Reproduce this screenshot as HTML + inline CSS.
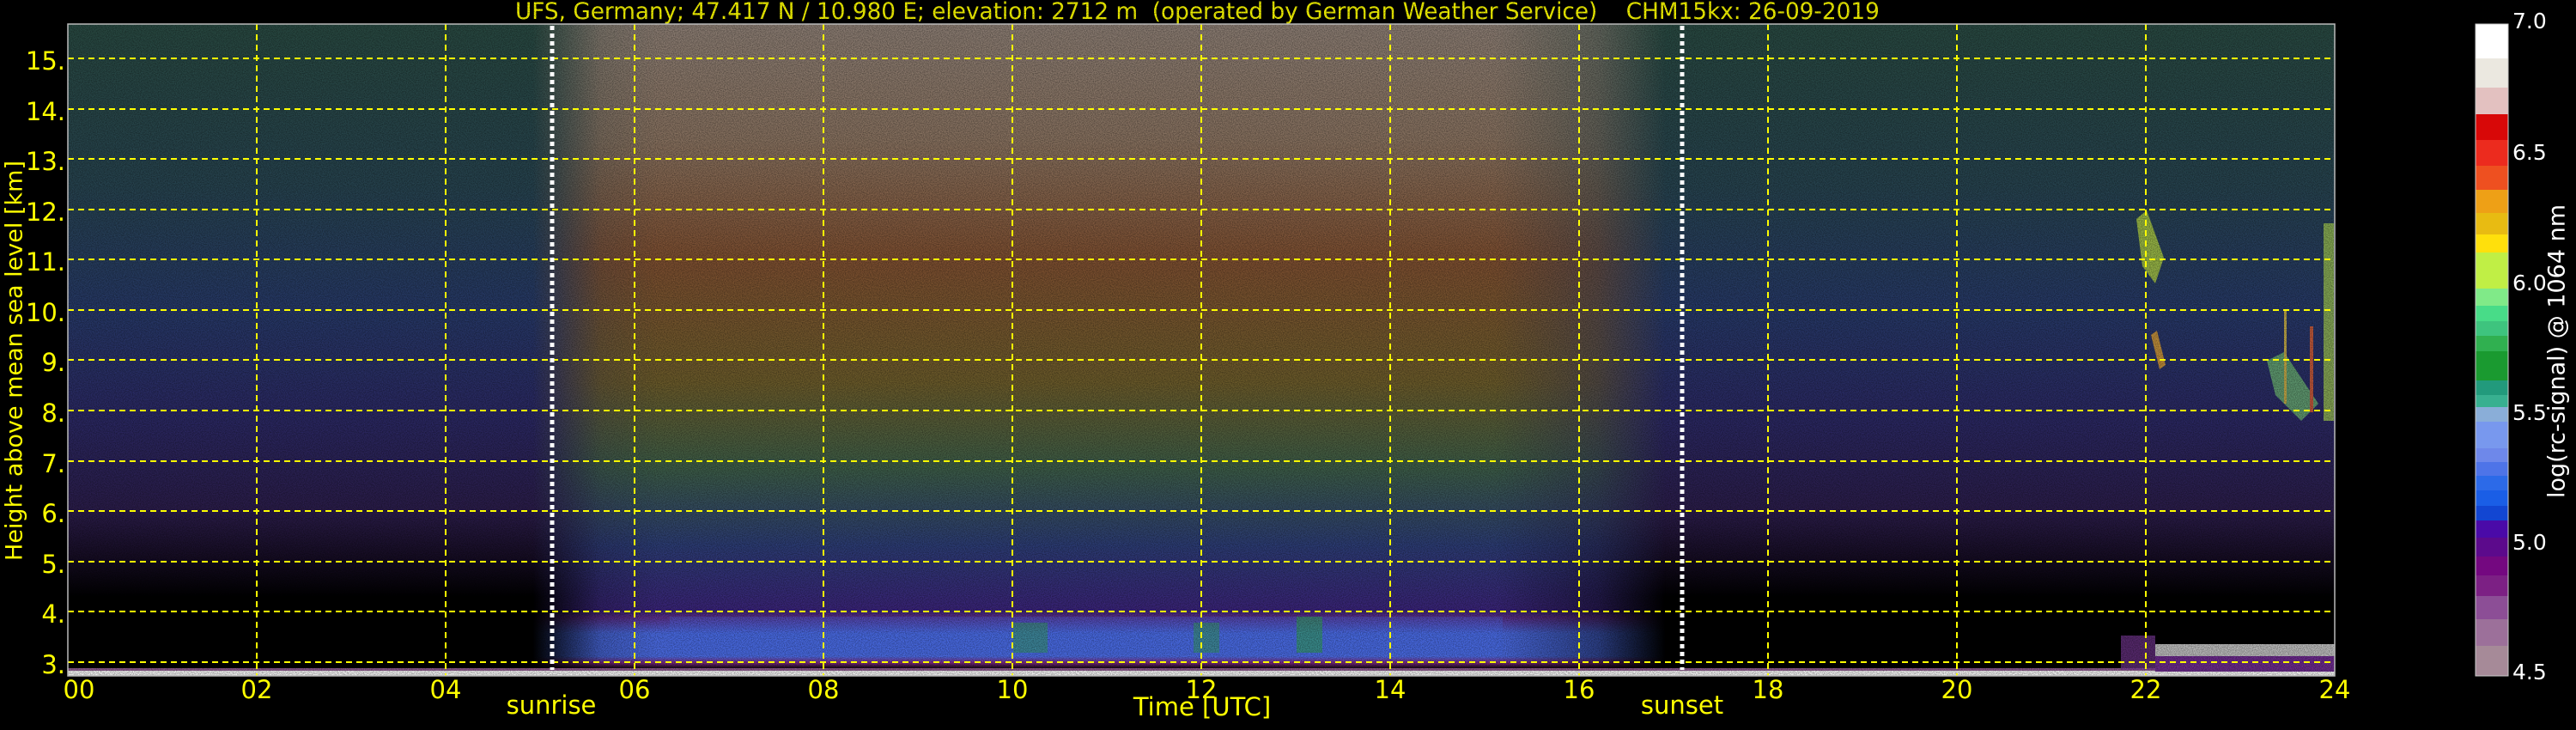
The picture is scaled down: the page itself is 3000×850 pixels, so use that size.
<!DOCTYPE html>
<html><head><meta charset="utf-8"><style>
body{margin:0;background:#000;width:3000px;height:850px;overflow:hidden;position:relative;font-family:"DejaVu Sans","Liberation Sans",sans-serif;}
.t{position:absolute;color:#ffff00;white-space:nowrap;}
.yl{position:absolute;color:#ffff00;font-size:29px;right:2924px;text-align:right;line-height:30px;}
.xl{position:absolute;color:#ffff00;font-size:29px;line-height:30px;transform:translateX(-50%);top:788px;}
.cl{position:absolute;color:#fff;font-size:25px;left:2926px;line-height:26px;}
</style></head><body>
<div class="t" style="left:600px;top:-2px;font-size:26.3px;line-height:32px;">UFS, Germany; 47.417 N / 10.980 E; elevation: 2712 m&nbsp; (operated by German Weather Service) &nbsp;&nbsp; CHM15kx: 26-09-2019</div>

<svg width="3000" height="850" style="position:absolute;left:0;top:0">
<defs>
<linearGradient id="night" x1="0" y1="28" x2="0" y2="787" gradientUnits="userSpaceOnUse">
<stop offset="0" stop-color="#284840"/>
<stop offset="0.25" stop-color="#26424e"/>
<stop offset="0.44" stop-color="#263866"/>
<stop offset="0.6" stop-color="#2a2862"/>
<stop offset="0.75" stop-color="#2a1c48"/>
<stop offset="0.82" stop-color="#150c22"/>
<stop offset="0.88" stop-color="#000"/>
<stop offset="1" stop-color="#000"/>
</linearGradient>
<linearGradient id="day" x1="0" y1="28" x2="0" y2="787" gradientUnits="userSpaceOnUse">
<stop offset="0" stop-color="#8a7c72"/>
<stop offset="0.18" stop-color="#86705e"/>
<stop offset="0.36" stop-color="#7c4e30"/>
<stop offset="0.55" stop-color="#6a5a2a"/>
<stop offset="0.68" stop-color="#3c5c46"/>
<stop offset="0.8" stop-color="#2c3c74"/>
<stop offset="0.9" stop-color="#3a2478"/>
<stop offset="0.91" stop-color="#5a2e8a"/>
<stop offset="0.935" stop-color="#4a6ae0"/>
<stop offset="0.97" stop-color="#4a6ae0"/>
<stop offset="0.98" stop-color="#7a2a80"/>
<stop offset="0.99" stop-color="#000"/>
<stop offset="1" stop-color="#000"/>
</linearGradient>
<linearGradient id="hmask" x1="79" y1="0" x2="2719" y2="0" gradientUnits="userSpaceOnUse">
<stop offset="0.205" stop-color="#fff" stop-opacity="0"/>
<stop offset="0.235" stop-color="#fff" stop-opacity="0.85"/>
<stop offset="0.26" stop-color="#fff" stop-opacity="1"/>
<stop offset="0.63" stop-color="#fff" stop-opacity="1"/>
<stop offset="0.675" stop-color="#fff" stop-opacity="0.6"/>
<stop offset="0.705" stop-color="#fff" stop-opacity="0"/>
</linearGradient>
<mask id="m"><rect x="79" y="28" width="2640" height="759" fill="url(#hmask)"/></mask>
<filter id="noise"><feTurbulence type="fractalNoise" baseFrequency="0.9" numOctaves="1" seed="3"/><feColorMatrix values="0 0 0 0 0  0 0 0 0 0  0 0 0 0 0  0 0 0 -1.6 1.1"/></filter>
</defs>
<rect x="79" y="28" width="2640" height="759" fill="url(#night)"/>
<rect x="79" y="28" width="2640" height="759" fill="url(#day)" mask="url(#m)"/>
<rect x="780" y="718" width="970" height="44" fill="#4466e0" opacity="0.35"/>
<rect x="1180" y="725" width="40" height="35" fill="#30a050" opacity="0.5"/>
<rect x="1390" y="725" width="30" height="35" fill="#30a050" opacity="0.5"/>
<rect x="1510" y="718" width="30" height="42" fill="#30a050" opacity="0.6"/>
<g opacity="0.8">
<polygon points="2488,255 2500,245 2520,300 2510,330 2495,310" fill="#b0d040"/>
<polygon points="2505,390 2512,385 2522,425 2515,430" fill="#e0a030"/>
<polygon points="2640,420 2660,410 2700,470 2680,490 2650,460" fill="#6ab070"/>
<rect x="2706" y="260" width="12" height="230" fill="#9ac050"/>
<rect x="2690" y="380" width="4" height="100" fill="#e06030"/>
<rect x="2660" y="360" width="3" height="110" fill="#e0c040"/>
</g>
<rect x="79" y="778" width="2640" height="5" fill="#8c5a8c"/>
<rect x="79" y="781" width="2640" height="6" fill="#f0f0f0"/>
<rect x="2470" y="740" width="40" height="40" fill="#7a3a9a" opacity="0.7"/>
<rect x="2510" y="750" width="209" height="14" fill="#e8e8e8" opacity="0.8"/>
<rect x="2510" y="764" width="209" height="18" fill="#6a2a8a"/>
<rect x="79" y="28" width="2640" height="759" filter="url(#noise)" opacity="0.5"/>
<g stroke="#ffff00" stroke-width="2" stroke-dasharray="7,5">
<line x1="79" x2="2719" y1="771" y2="771"/><line x1="79" x2="2719" y1="712" y2="712"/>
<line x1="79" x2="2719" y1="654" y2="654"/><line x1="79" x2="2719" y1="595" y2="595"/>
<line x1="79" x2="2719" y1="537" y2="537"/><line x1="79" x2="2719" y1="478" y2="478"/>
<line x1="79" x2="2719" y1="419" y2="419"/><line x1="79" x2="2719" y1="361" y2="361"/>
<line x1="79" x2="2719" y1="302" y2="302"/><line x1="79" x2="2719" y1="244" y2="244"/>
<line x1="79" x2="2719" y1="185" y2="185"/><line x1="79" x2="2719" y1="127" y2="127"/>
<line x1="79" x2="2719" y1="68" y2="68"/>
<line x1="299" x2="299" y1="28" y2="787"/><line x1="519" x2="519" y1="28" y2="787"/>
<line x1="739" x2="739" y1="28" y2="787"/><line x1="959" x2="959" y1="28" y2="787"/>
<line x1="1179" x2="1179" y1="28" y2="787"/><line x1="1399" x2="1399" y1="28" y2="787"/>
<line x1="1619" x2="1619" y1="28" y2="787"/><line x1="1839" x2="1839" y1="28" y2="787"/>
<line x1="2059" x2="2059" y1="28" y2="787"/><line x1="2279" x2="2279" y1="28" y2="787"/>
<line x1="2499" x2="2499" y1="28" y2="787"/>
</g>
<g stroke="#fff" stroke-width="5" stroke-dasharray="5,4">
<line x1="643" x2="643" y1="30" y2="780"/><line x1="1959" x2="1959" y1="30" y2="780"/>
</g>
<rect x="79" y="28" width="2640" height="759" fill="none" stroke="#bbb" stroke-width="1.5"/>
<g>
<rect x="2883" y="28" width="38" height="40" fill="#ffffff"/>
<rect x="2883" y="68" width="38" height="34" fill="#ebe8e0"/>
<rect x="2883" y="102" width="38" height="31" fill="#e3c1c0"/>
<rect x="2883" y="133" width="38" height="30" fill="#d80808"/>
<rect x="2883" y="163" width="38" height="30" fill="#ec2b1e"/>
<rect x="2883" y="193" width="38" height="28" fill="#ee5020"/>
<rect x="2883" y="221" width="38" height="27" fill="#eea016"/>
<rect x="2883" y="248" width="38" height="25" fill="#e8bb12"/>
<rect x="2883" y="273" width="38" height="21" fill="#ffe00c"/>
<rect x="2883" y="294" width="38" height="42" fill="#c0ef45"/>
<rect x="2883" y="336" width="38" height="20" fill="#80ea88"/>
<rect x="2883" y="356" width="38" height="18" fill="#48dc88"/>
<rect x="2883" y="374" width="38" height="17" fill="#3ec47e"/>
<rect x="2883" y="391" width="38" height="18" fill="#30b050"/>
<rect x="2883" y="409" width="38" height="34" fill="#1a9a30"/>
<rect x="2883" y="443" width="38" height="17" fill="#229a7c"/>
<rect x="2883" y="460" width="38" height="14" fill="#38b090"/>
<rect x="2883" y="474" width="38" height="17" fill="#8aaed8"/>
<rect x="2883" y="491" width="38" height="31" fill="#7898ee"/>
<rect x="2883" y="522" width="38" height="16" fill="#6e88ea"/>
<rect x="2883" y="538" width="38" height="16" fill="#4e74e8"/>
<rect x="2883" y="554" width="38" height="17" fill="#2c6ae8"/>
<rect x="2883" y="571" width="38" height="18" fill="#1a5ee6"/>
<rect x="2883" y="589" width="38" height="17" fill="#1246d2"/>
<rect x="2883" y="606" width="38" height="20" fill="#4a0aa8"/>
<rect x="2883" y="626" width="38" height="22" fill="#5c0a8c"/>
<rect x="2883" y="648" width="38" height="22" fill="#740880"/>
<rect x="2883" y="670" width="38" height="24" fill="#7c2084"/>
<rect x="2883" y="694" width="38" height="27" fill="#8c4e96"/>
<rect x="2883" y="721" width="38" height="31" fill="#9c709a"/>
<rect x="2883" y="752" width="38" height="35" fill="#a68a98"/>
<rect x="2883" y="28" width="38" height="759" fill="none" stroke="#ccc" stroke-width="1"/>
</g>
</svg>

<div class="yl" style="top:56px">15.</div>
<div class="yl" style="top:115px">14.</div>
<div class="yl" style="top:173px">13.</div>
<div class="yl" style="top:232px">12.</div>
<div class="yl" style="top:290px">11.</div>
<div class="yl" style="top:349px">10.</div>
<div class="yl" style="top:407px">9.</div>
<div class="yl" style="top:466px">8.</div>
<div class="yl" style="top:525px">7.</div>
<div class="yl" style="top:583px">6.</div>
<div class="yl" style="top:642px">5.</div>
<div class="yl" style="top:700px">4.</div>
<div class="yl" style="top:759px">3.</div>

<div class="t" style="left:17px;top:420px;font-size:27px;transform:translate(-50%,-50%) rotate(-90deg);">Height above mean sea level [km]</div>

<div class="xl" style="left:92px">00</div>
<div class="xl" style="left:299px">02</div>
<div class="xl" style="left:519px">04</div>
<div class="xl" style="left:739px">06</div>
<div class="xl" style="left:959px">08</div>
<div class="xl" style="left:1179px">10</div>
<div class="xl" style="left:1399px">12</div>
<div class="xl" style="left:1619px">14</div>
<div class="xl" style="left:1839px">16</div>
<div class="xl" style="left:2059px">18</div>
<div class="xl" style="left:2279px">20</div>
<div class="xl" style="left:2499px">22</div>
<div class="xl" style="left:2719px">24</div>
<div class="xl" style="left:642px;top:806px">sunrise</div>
<div class="xl" style="left:1400px;top:808px">Time [UTC]</div>
<div class="xl" style="left:1959px;top:806px">sunset</div>

<div class="cl" style="top:12px">7.0</div>
<div class="cl" style="top:165px">6.5</div>
<div class="cl" style="top:317px">6.0</div>
<div class="cl" style="top:468px">5.5</div>
<div class="cl" style="top:619px">5.0</div>
<div class="cl" style="top:770px">4.5</div>
<div style="position:absolute;left:2978px;top:409px;color:#fff;font-size:27px;white-space:nowrap;transform:translate(-50%,-50%) rotate(-90deg);">log(rc-signal) @ 1064 nm</div>
</body></html>
